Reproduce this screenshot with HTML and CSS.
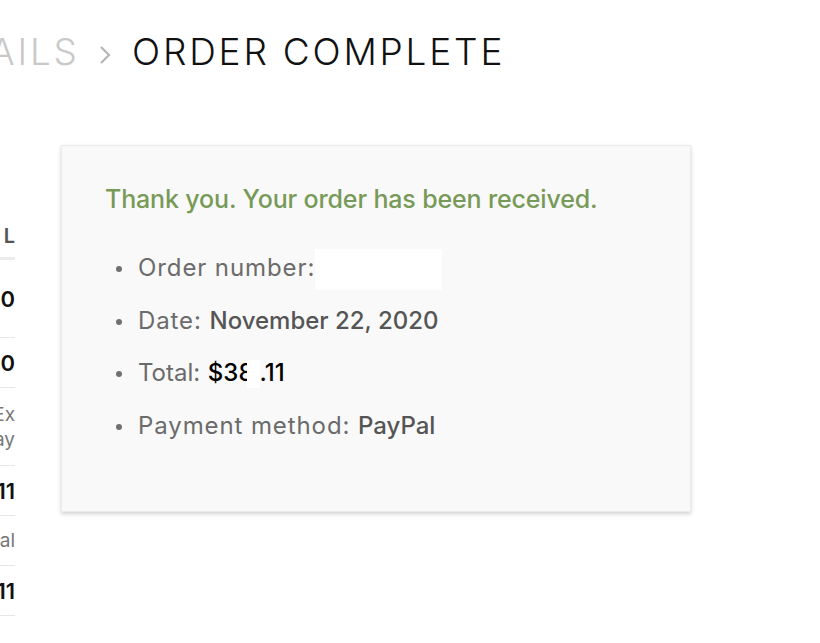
FILE: index.html
```html
<!DOCTYPE html>
<html lang="en">
<head>
<meta charset="utf-8">
<title>Order Complete</title>
<link rel="stylesheet" href="styles.css">
</head>
<body>
<header class="steps">
  <span class="step-prev"><span>CHECKOUT DETAILS</span></span>
  <span class="step-sep">
    <svg width="14" height="22" viewBox="0 0 14 22"><path d="M3 3 L11 11 L3 19" fill="none" stroke="#b5b5b5" stroke-width="2.2"/></svg>
  </span>
  <span class="step-current">ORDER COMPLETE</span>
</header>
<main class="content">
  <div class="order-col">
    <div class="row head"><span class="head-text">TOTAL</span></div>
    <div class="row tall"><span class="val">$380.00</span></div>
    <div class="row"><span class="val">$380.00</span></div>
    <div class="row tall"><span class="ship">FedEx<br>2Day</span></div>
    <div class="row"><span class="val">$382.11</span></div>
    <div class="row"><span class="muted">PayPal</span></div>
    <div class="row"><span class="val">$382.11</span></div>
  </div>
  <section class="card">
    <p class="thanks">Thank you. Your order has been received.</p>
    <ul class="overview">
      <li>Order number:<span class="mask mask-num"></span></li>
      <li>Date: <strong>November 22, 2020</strong></li>
      <li><span class="tight">Total:</span> <strong class="amount">$38<span class="mask mask-amt"></span>.11</strong></li>
      <li>Payment method: <strong>PayPal</strong></li>
    </ul>
  </section>
</main>
</body>
</html>
```
FILE: styles.css
```css
html, body {
  margin: 0;
  padding: 0;
  background: #ffffff;
}
body {
  font-family: "Inter", "Open Sans", sans-serif;
  overflow: hidden;
}
.steps {
  display: flex;
  align-items: baseline;
  padding-top: 30px;
  height: 44px;
  font-size: 37px;
  line-height: 44px;
  font-weight: 300;
}
.step-prev {
  width: 77px;
  overflow: hidden;
  display: flex;
  justify-content: flex-end;
  white-space: nowrap;
  color: #c9c9c9;
  letter-spacing: 2.8px;
}
.step-prev span {
  margin-right: -2.8px;
}
.step-sep {
  width: 55px;
  display: flex;
  justify-content: center;
  align-self: center;
  padding-top: 6px;
}
.step-current {
  color: #111111;
  white-space: nowrap;
  letter-spacing: 2.8px;
}
.content {
  display: flex;
  align-items: flex-start;
  gap: 46px;
}
.order-col {
  width: 15px;
  overflow: hidden;
  margin-top: 150px;
  flex: none;
}
.row {
  box-sizing: border-box;
  height: 50px;
  border-bottom: 1px solid #e6e6e6;
  display: flex;
  align-items: center;
  justify-content: flex-end;
  white-space: nowrap;
  font-size: 22px;
  color: #111;
}
.row.tall {
  height: 78px;
}
.row.head {
  height: 36px;
  border-bottom: 3px solid #ebebeb;
  align-items: flex-start;
  font-size: 20px;
  line-height: 24px;
  font-weight: 600;
  color: #555;
}
.head-text {
  letter-spacing: 5px;
  margin-right: -5px;
}
.val {
  font-weight: 600;
}
.ship {
  font-size: 19px;
  line-height: 25px;
  color: #777;
  text-align: right;
}
.muted {
  font-size: 19px;
  color: #777;
}
.card {
  box-sizing: border-box;
  width: 630px;
  height: 367px;
  margin-top: 71px;
  background: #f9f9f9;
  border: 1px solid #ececec;
  box-shadow: 0 2px 4px rgba(0, 0, 0, 0.18);
  padding: 38px 44px 0 43px;
  flex: none;
}
.thanks {
  margin: 0;
  font-size: 25px;
  line-height: 30px;
  font-weight: 500;
  letter-spacing: -0.15px;
  color: #789a58;
}
.overview {
  margin: 28px 0 0;
  padding: 0 0 0 33px;
  list-style: none;
  font-size: 24px;
  line-height: 52.5px;
  color: #6b6b6b;
  letter-spacing: 0.9px;
}
.overview .tight {
  letter-spacing: 0;
}
.overview li::before {
  content: "";
  display: inline-block;
  width: 6px;
  height: 6px;
  border-radius: 50%;
  background: #707070;
  margin-left: -22px;
  margin-right: 16px;
  vertical-align: middle;
}
.overview strong {
  font-weight: 500;
  color: #555;
  letter-spacing: 0;
}
.overview .amount {
  color: #000;
}
.mask {
  display: inline-block;
  background: #ffffff;
  vertical-align: middle;
}
.mask-num {
  width: 127px;
  height: 41px;
}
.mask-amt {
  width: 13px;
  height: 28px;
  margin-left: -7px;
  margin-right: 0;
}
```
